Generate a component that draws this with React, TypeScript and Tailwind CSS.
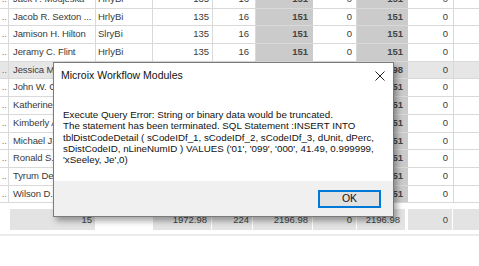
import React from "react";

type Row = { ind: string; name: string; type: string; c3: string; c4: string; c5: string; c6: string; c7: string; c8: string; sel?: boolean };

const rows: Row[] = [
  { ind: "..", name: "Jack F. Moujeska", type: "HrlyBi", c3: "135", c4: "16", c5: "151", c6: "0", c7: "151", c8: "0" },
  { ind: "..", name: "Jacob R. Sexton ...", type: "HrlyBi", c3: "135", c4: "16", c5: "151", c6: "0", c7: "151", c8: "0" },
  { ind: "..", name: "Jamison H. Hilton", type: "SlryBi", c3: "135", c4: "16", c5: "151", c6: "0", c7: "151", c8: "0" },
  { ind: "..", name: "Jeramy C. Flint", type: "HrlyBi", c3: "135", c4: "16", c5: "151", c6: "0", c7: "151", c8: "0" },
  { ind: "..", name: "Jessica M. Carter", type: "HrlyBi", c3: "135", c4: "16", c5: "151", c6: "0", c7: "2196.98", c8: "0", sel: true },
  { ind: "..", name: "John W. Chase", type: "HrlyBi", c3: "135", c4: "16", c5: "151", c6: "0", c7: "151", c8: "0" },
  { ind: "..", name: "Katherine L. Day", type: "HrlyBi", c3: "135", c4: "16", c5: "151", c6: "0", c7: "151", c8: "0" },
  { ind: "..", name: "Kimberly A. Hart", type: "HrlyBi", c3: "135", c4: "16", c5: "151", c6: "0", c7: "151", c8: "0" },
  { ind: "..", name: "Michael J. Stone", type: "HrlyBi", c3: "135", c4: "16", c5: "151", c6: "0", c7: "151", c8: "0" },
  { ind: "..", name: "Ronald S. Pierce", type: "HrlyBi", c3: "135", c4: "16", c5: "151", c6: "0", c7: "151", c8: "0" },
  { ind: "..", name: "Tyrum Dean", type: "HrlyBi", c3: "135", c4: "16", c5: "151", c6: "0", c7: "151", c8: "0" },
  { ind: "..", name: "Wilson D. Gray", type: "HrlyBi", c3: "135", c4: "16", c5: "151", c6: "0", c7: "151", c8: "0" },
];

function GridRow({ r }: { r: Row }) {
  const bg = r.sel ? "bg-[#e6e6e6]" : "bg-white";
  return (
    <div className={`flex h-[17.7px] shrink-0 border-b border-[#d9d9d9] text-[#3a3a3a] leading-[16.7px] ${bg}`}>
      <div className="w-[9px] shrink-0 border-r border-[#d9d9d9] overflow-hidden whitespace-nowrap text-right pr-[1px] text-[#777]">{r.ind}</div>
      <div className="w-[87px] shrink-0 border-r border-[#d9d9d9] overflow-hidden whitespace-nowrap pl-[4px] tracking-[-0.1px]">{r.name}</div>
      <div className="w-[57px] shrink-0 border-r border-[#d9d9d9] overflow-hidden whitespace-nowrap pl-[2px]">{r.type}</div>
      <div className="w-[60px] shrink-0 border-r border-[#d9d9d9] text-right pr-[3px]">{r.c3}</div>
      <div className="w-[43px] shrink-0 border-r border-[#d9d9d9] text-right pr-[6px]">{r.c4}</div>
      <div className="w-[57px] shrink-0 border-r border-[#cbcbcb] bg-[#cbcbcb] text-right pr-[4px] font-bold text-[#444]">{r.c5}</div>
      <div className="w-[44px] shrink-0 border-r border-[#d9d9d9] text-right pr-[4px]">{r.c6}</div>
      <div className="w-[51px] shrink-0 border-r border-[#cbcbcb] bg-[#cbcbcb] text-right pr-[4px] font-bold text-[#444]">{r.c7}</div>
      <div className="w-[46px] shrink-0 border-r border-[#d9d9d9] text-right pr-[5px]">{r.c8}</div>
      <div className="flex-1" />
    </div>
  );
}

export default function App() {
  return (
    <div
      className="relative w-[479px] h-[266px] overflow-hidden bg-white text-[9.5px]"
      style={{ fontFamily: '"Liberation Sans", Arial, sans-serif' }}
    >
      <div className="flex flex-col mt-[-9px]">
        {rows.map((r, i) => (
          <GridRow key={i} r={r} />
        ))}
        {/* footer summary */}
        <div className="flex h-[21px] mt-[6px] text-[#444] leading-[21px]">
          <div className="w-[10px] shrink-0 bg-white" />
          <div className="w-[85px] shrink-0 bg-[#e3e3e3] text-right pr-[3px]">15</div>
          <div className="w-[58px] shrink-0 bg-white" />
          <div className="w-[59px] shrink-0 bg-[#e3e3e3] text-right pr-[4px] border-r border-white">1972.98</div>
          <div className="w-[41px] shrink-0 bg-[#e3e3e3] text-right pr-[3px] border-r border-white">224</div>
          <div className="w-[60px] shrink-0 bg-[#e3e3e3] text-right pr-[4px] border-r border-white">2196.98</div>
          <div className="w-[44px] shrink-0 bg-[#e3e3e3] text-right pr-[4px] border-r border-white">0</div>
          <div className="w-[51px] shrink-0 bg-[#e3e3e3] text-right pr-[5px] border-r-[3px] border-white">2196.98</div>
          <div className="w-[45px] shrink-0 bg-[#e3e3e3] text-right pr-[4px] border-r border-white">0</div>
          <div className="flex-1 bg-[#e3e3e3]" />
        </div>
        <div className="h-[4px]" />
        <div className="h-[2px] bg-[#ececec]" />
      </div>

      {/* dialog */}
      <div className="absolute left-[53px] top-[62px] w-[341px] h-[155px] border border-[#7b7b7b] bg-white flex flex-col shadow-[3px_4px_6px_rgba(0,0,0,0.35)]"
        style={{ fontFamily: '"Liberation Sans", Arial, sans-serif' }}>
        <div className="flex items-center justify-between h-[23px] pl-[7px] pr-[7px] mt-[1px]">
          <span className="text-[10.5px] text-[#111]">Microix Workflow Modules</span>
          <svg width="10" height="10" viewBox="0 0 10 10" className="mr-[1px]">
            <path d="M0.5 0.5 L9.5 9.5 M9.5 0.5 L0.5 9.5" stroke="#222" strokeWidth="1" />
          </svg>
        </div>
        <div className="flex-1 pl-[9px] pr-[4px] pt-[22px] text-[9.75px] leading-[11.25px] text-[#111] whitespace-nowrap">
          <div>Execute Query Error: String or binary data would be truncated.</div>
          <div>The statement has been terminated. SQL Statement :INSERT INTO</div>
          <div>tblDistCodeDetail ( sCodeIDf_1, sCodeIDf_2, sCodeIDf_3, dUnit, dPerc,</div>
          <div>sDistCodeID, nLineNumID ) VALUES ('01', '099', '000', 41.49, 0.999999,</div>
          <div>'xSeeley, Je',0)</div>
        </div>
        <div className="h-[35px] bg-[#f0f0f0] flex items-center justify-end pr-[12px]">
          <div className="w-[63px] h-[18px] border-2 border-[#0078d7] bg-[#e1e1e1] flex items-center justify-center text-[10.5px] text-[#111]">
            OK
          </div>
        </div>
      </div>
    </div>
  );
}
